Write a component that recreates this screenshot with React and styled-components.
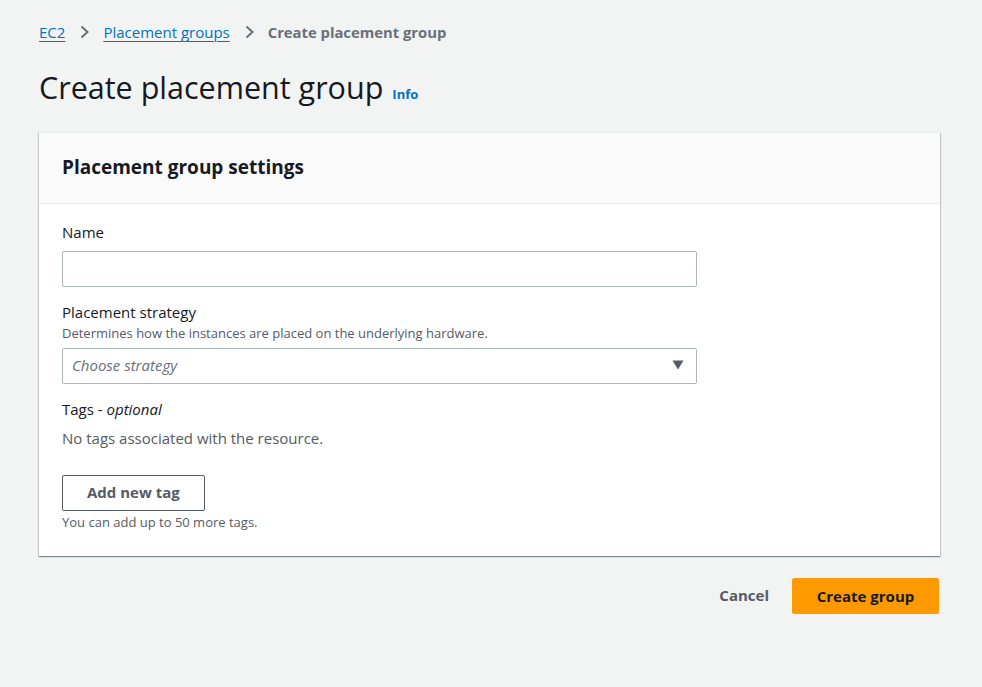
import React from "react";
import styled, { createGlobalStyle } from "styled-components";

const Global = createGlobalStyle`
  html, body {
    margin: 0;
    padding: 0;
    background: #f2f3f3;
    font-family: "Open Sans", "Liberation Sans", sans-serif;
    color: #16191f;
  }
`;

function Chevron() {
  return (
    <svg width="16" height="16" viewBox="0 0 16 16">
      <path d="M5.5 2.5l6 5.5-6 5.5" fill="none" stroke="#687078" strokeWidth="2" />
    </svg>
  );
}

function Caret() {
  return (
    <svg width="12" height="10" viewBox="0 0 12 10">
      <path d="M0.5 0.5h11L6 9.5z" fill="#545b64" />
    </svg>
  );
}

export default function App() {
  return (
    <Page>
      <Global />
      <Crumbs>
        <CrumbLink>EC2</CrumbLink>
        <Chevron />
        <CrumbLink>Placement groups</CrumbLink>
        <Chevron />
        <CrumbCurrent>Create placement group</CrumbCurrent>
      </Crumbs>
      <TitleRow>
        <h1>Create placement group</h1>
        <InfoLink>Info</InfoLink>
      </TitleRow>
      <Card>
        <CardHeader>Placement group settings</CardHeader>
        <CardBody>
          <Field>
            <Label>Name</Label>
            <Input />
          </Field>
          <Field>
            <Label>Placement strategy</Label>
            <Hint>Determines how the instances are placed on the underlying hardware.</Hint>
            <Select>
              <span>Choose strategy</span>
              <Caret />
            </Select>
          </Field>
          <Field>
            <Label>
              Tags - <em>optional</em>
            </Label>
            <Empty>No tags associated with the resource.</Empty>
            <TagButton>Add new tag</TagButton>
            <Hint $below>You can add up to 50 more tags.</Hint>
          </Field>
        </CardBody>
      </Card>
      <Footer>
        <LinkButton>Cancel</LinkButton>
        <PrimaryButton>Create group</PrimaryButton>
      </Footer>
    </Page>
  );
}

const Page = styled.div`
  padding: 19px 42px 40px 39px;
  box-sizing: border-box;
  width: 982px;
  min-height: 687px;
`;

const Crumbs = styled.nav`
  display: flex;
  align-items: center;
  gap: 11px;
  height: 26px;
  font-size: 15px;
`;

const CrumbLink = styled.a`
  color: #0073bb;
  text-decoration: underline;
  text-underline-offset: 3px;
  text-decoration-thickness: 1px;
`;

const CrumbCurrent = styled.span`
  color: #687078;
  font-weight: 700;
  font-size: 14.8px;
`;

const TitleRow = styled.div`
  display: flex;
  align-items: baseline;
  gap: 9px;
  margin: 23px 0 26px;
  h1 {
    margin: 0;
    font-size: 30.5px;
    font-weight: 400;
    line-height: 38px;
    color: #16191f;
  }
`;

const InfoLink = styled.a`
  color: #0073bb;
  font-size: 13px;
  font-weight: 700;
`;

const Card = styled.section`
  background: #fff;
  box-shadow: 0 1px 1px 0 rgba(0, 28, 36, 0.3), 1px 1px 1px 0 rgba(0, 28, 36, 0.15),
    -1px 1px 1px 0 rgba(0, 28, 36, 0.15);
  border-top: 1px solid #eaeded;
`;

const CardHeader = styled.h2`
  margin: 0;
  background: #fafafa;
  border-bottom: 1px solid #eaeded;
  padding: 0 23px 2px;
  height: 71px;
  box-sizing: border-box;
  display: flex;
  align-items: center;
  font-size: 19px;
  font-weight: 700;
  color: #16191f;
`;

const CardBody = styled.div`
  padding: 17px 23px 26px;
  display: flex;
  flex-direction: column;
  gap: 14px;
`;

const Field = styled.div`
  display: flex;
  flex-direction: column;
  align-items: flex-start;
`;

const Label = styled.label`
  font-size: 15px;
  line-height: 22px;
  color: #16191f;
  margin-bottom: 8px;
  em {
    font-style: italic;
  }
`;

const Hint = styled.div`
  font-size: 13px;
  line-height: 16px;
  color: #545b64;
  margin-top: ${(p) => (p.$below ? "3px" : "-6px")};
  margin-bottom: ${(p) => (p.$below ? "0" : "7px")};
`;

const Input = styled.input`
  box-sizing: border-box;
  width: 635px;
  height: 36px;
  border: 1px solid #aab7b8;
  border-radius: 2px;
  font: inherit;
`;

const Select = styled.div`
  box-sizing: border-box;
  width: 635px;
  height: 36px;
  border: 1px solid #aab7b8;
  border-radius: 2px;
  display: flex;
  align-items: center;
  justify-content: space-between;
  padding: 0 12px 2px 9px;
  span {
    font-size: 15px;
    font-style: italic;
    color: #687078;
  }
`;

const Empty = styled.div`
  font-size: 15px;
  line-height: 20px;
  color: #545b64;
  margin-top: 0;
  margin-bottom: 27px;
`;

const TagButton = styled.button`
  box-sizing: border-box;
  height: 36px;
  padding: 0 24px 2px;
  background: #fff;
  border: 1px solid #545b64;
  border-radius: 2px;
  font-family: inherit;
  font-size: 15px;
  font-weight: 700;
  color: #545b64;
`;

const Footer = styled.div`
  display: flex;
  justify-content: flex-end;
  align-items: center;
  gap: 23px;
  margin-top: 22px;
`;

const LinkButton = styled.button`
  background: none;
  border: none;
  padding: 0 0 2px;
  font-family: inherit;
  font-size: 15px;
  font-weight: 700;
  color: #545b64;
`;

const PrimaryButton = styled.button`
  box-sizing: border-box;
  height: 36px;
  width: 147px;
  margin-right: 1px;
  padding-bottom: 2px;
  background: #ff9900;
  border: 1px solid #ff9900;
  border-radius: 2px;
  font-family: inherit;
  font-size: 15px;
  font-weight: 700;
  color: #16191f;
`;
